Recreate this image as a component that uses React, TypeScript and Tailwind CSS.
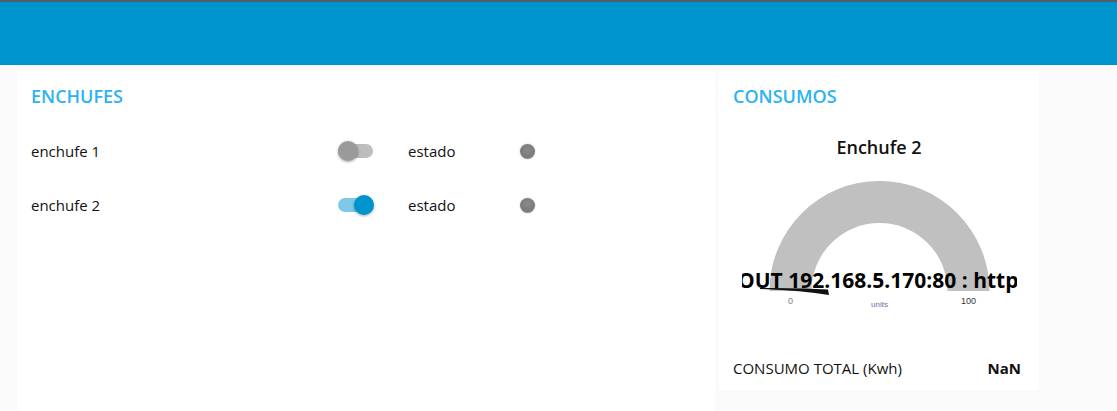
import React from "react";

function Toggle({ on }: { on: boolean }) {
  return (
    <div className="relative w-[36px] h-[20px] flex items-center">
      <div className={`w-[35px] h-[14px] rounded-full ${on ? "bg-[#7fc9e7]" : "bg-[#bdbdbd]"}`} />
      <div
        className={`absolute top-0 w-[20px] h-[20px] rounded-full shadow-[0_1px_3px_rgba(0,0,0,0.35)] ${
          on ? "left-[16px] bg-[#0094ce]" : "left-0 bg-[#9a9a9a]"
        }`}
      />
    </div>
  );
}

function Dot() {
  return (
    <div className="w-[15px] h-[15px] rounded-full bg-[radial-gradient(circle_at_50%_40%,#8a8a8a_0%,#7a7a7a_60%,#9a9a9a_100%)] shadow-[0_0_2px_rgba(0,0,0,0.25)]" />
  );
}

function Row({ label, on }: { label: string; on: boolean }) {
  return (
    <div className="h-[54px] flex items-center">
      <div className="w-[307px] text-[15px] text-[#111]">{label}</div>
      <div className="w-[70px] flex items-center">
        <Toggle on={on} />
      </div>
      <div className="w-[112px] text-[15px] text-[#111]">estado</div>
      <Dot />
    </div>
  );
}

function Gauge() {
  const cx = 137.5;
  const cy = 132;
  const ro = 110;
  const ri = 68;
  const d = `M ${cx - ro} ${cy} A ${ro} ${ro} 0 0 1 ${cx + ro} ${cy} L ${cx + ri} ${cy} A ${ri} ${ri} 0 0 0 ${cx - ri} ${cy} Z`;
  return (
    <svg width="275" height="160" viewBox="0 0 275 160" className="block mx-auto overflow-hidden">
      <path d={d} fill="#c0c0c0" />
      <path d="M 18 129 Q 55 128.5 86 130.5 L 87 136 Q 60 131.5 18 130 Z" fill="#111" />
      <text
        x={-4}
        y={129}
        textAnchor="end"
        fontFamily="'Open Sans', sans-serif"
        fontWeight="700"
        fontSize="21"
        fill="#010101"
      >
        Error: connect ETIMED
      </text>
      <text
        x={-4}
        y={129}
        fontFamily="'Open Sans', sans-serif"
        fontWeight="700"
        fontSize="21"
        fill="#010101"
      >
        OUT 192.168.5.170:80 : http://192.168.5.170
      </text>
      <text x={48.5} y={145} textAnchor="middle" fontFamily="Arial, sans-serif" fontSize="9" fill="#8a7a7a">
        0
      </text>
      <text x={137.5} y={148} textAnchor="middle" fontFamily="Arial, sans-serif" fontSize="8" fill="#6a72a0">
        units
      </text>
      <text x={226.5} y={145} textAnchor="middle" fontFamily="Arial, sans-serif" fontSize="9" fill="#333">
        100
      </text>
    </svg>
  );
}

export default function App() {
  return (
    <div className="w-[1117px] h-[411px] overflow-hidden bg-[#fafafa] font-['Open_Sans',sans-serif]">
      <div className="h-[65px] bg-[#0094ce] border-t-2 border-[#555d66]" />
      <div className="flex pl-[17px] pt-[6px] gap-[4px]">
        <div className="w-[698px] h-[360px] bg-white pl-[14px] pt-[13px]">
          <div className="leading-[24px] text-[18px] font-semibold text-[#2db3f0]">ENCHUFES</div>
          <div className="mt-[16px]">
            <Row label="enchufe 1" on={false} />
            <Row label="enchufe 2" on={true} />
          </div>
        </div>
        <div className="w-[320px] h-[319px] bg-white pt-[13px]">
          <div className="pl-[14px] leading-[24px] text-[18px] font-semibold text-[#2db3f0]">CONSUMOS</div>
          <div className="mt-[27px] leading-[24px] text-[18px] font-semibold text-[#111] text-center">Enchufe 2</div>
          <Gauge />
          <div className="mt-[37px] h-[24px] flex items-center justify-between pl-[14px] pr-[18px] text-[15px] text-[#111]">
            <span>CONSUMO TOTAL (Kwh)</span>
            <span className="font-bold">NaN</span>
          </div>
        </div>
      </div>
    </div>
  );
}
